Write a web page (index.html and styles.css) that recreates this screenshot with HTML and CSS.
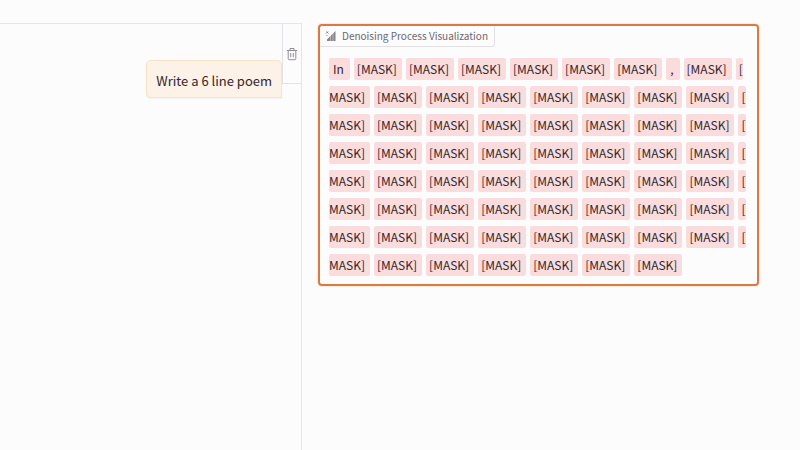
FILE: index.html
```
<!DOCTYPE html>
<html lang="en">
<head>
    <meta charset="UTF-8">
    <meta name="viewport" content="width=device-width, initial-scale=1.0">
    <title>Denoising Process Visualization</title>
    <link rel="stylesheet" href="styles.css">
</head>
<body>
    <main class="layout">
        <section class="chat">
            <button class="clear" type="button" aria-label="Clear">
                <svg viewBox="0 0 12 14" width="12" height="14" fill="none" stroke="currentColor">
                    <path d="M1 3.5h10M4 3.5V1.5h4v2M2.2 3.5v8.2q0 1 1 1h5.6q1 0 1-1V3.5M4.7 6v4.3M7.3 6v4.3"/>
                </svg>
            </button>
            <p class="message">Write a 6 line poem</p>
        </section>
        <section class="denoise">
            <h2 class="block-label">
                <svg viewBox="0 0 12 12" width="12" height="12">
                    <path fill="currentColor" opacity=".8" d="M10.500 1v10H2V9.500z"/>
                    <path fill="none" stroke="#fdfcfd" stroke-width=".4" d="M5.500 5v6M8 3v8"/>
                    <path fill="none" stroke="currentColor" stroke-width=".8" d="M1 3.500l2-2M1.500 1.500l2 2M1.500 5.500h1"/>
                </svg>
                Denoising Process Visualization
            </h2>
            <div class="tokens" id="tokens"></div>
        </section>
    </main>

    <script>
        const mask = '[MASK]';
        const full = ['MASK]', ...Array(7).fill(mask), '['];
        const lines = [
            ['In', ...Array(6).fill(mask), ',', mask, '['],
            ...Array(6).fill(full),
            ['MASK]', ...Array(6).fill(mask)]
        ];

        // a token that wraps is cut flush at the line edge
        function tokenClass(text) {
            if (text === 'MASK]') return 'token tail';
            if (text === '[') return 'token head';
            if (text !== mask) return 'token word';
            return 'token';
        }

        document.getElementById('tokens').innerHTML = lines.map(line => `
            <div class="line">
                ${line.map(text => `<span class="${tokenClass(text)}">${text}</span>`).join('')}
            </div>
        `).join('');
    </script>
</body>
</html>
```
FILE: styles.css
```
* {
    box-sizing: border-box;
}
body {
    margin: 0;
    background-color: #fdfcfd;
    color: #30262b;
    font-family: "Noto Sans CJK SC", "Open Sans", sans-serif;
}
.layout {
    display: grid;
    grid-template-columns: 302fr 441fr;
    gap: 16px;
    align-items: start;
    min-height: 100vh;
    padding: 23px 41px 0 0;
}
.chat {
    display: flex;
    align-items: flex-start;
    flex-direction: row-reverse;
    align-self: stretch;
    border-top: 1px solid #e8e5e8;
    border-right: 1px solid #e8e5e8;
}
.clear {
    display: flex;
    justify-content: center;
    align-items: center;
    width: 19px;
    height: 60px;
    padding: 0;
    border: solid #e4e1e6;
    border-width: 0 0 1px 1px;
    background: none;
    color: #908d94;
    cursor: pointer;
}
.message {
    margin: 36px 0 0;
    padding: 10px 9px 6px;
    border: 1px solid #fae3c4;
    border-radius: 5px 5px 0 5px;
    background-color: #fdf2e7;
    box-shadow: 0 1px 2px #0000000d;
    font-size: 13px;
    line-height: 20px;
}
.denoise {
    border: 2px solid #d97a45;
    border-radius: 4px;
    margin-top: 1px;
    box-shadow: 0 0 2px #f5bd92;
    overflow: hidden;
}
.block-label {
    display: flex;
    align-items: center;
    gap: 5px;
    width: fit-content;
    margin: 0;
    padding: 0 6px 0 5px;
    border: solid #e4e1e6;
    border-width: 0 1px 1px 0;
    border-radius: 0 0 3px 0;
    color: #6b676f;
    font-size: 10px;
    font-weight: 400;
    line-height: 20px;
}
.tokens {
    display: flex;
    flex-direction: column;
    gap: 6px;
    padding: 11px 9px 8px;
    font-size: 12px;
    line-height: 22px;
}
.line {
    display: flex;
    gap: 4px;
}
.token {
    padding: 0 5px 0 3px;
    border-radius: 2px;
    background-color: #fbdcdd;
    white-space: nowrap;
}
.word {
    padding: 0 6px 0 4px;
}
.tail {
    padding-left: 0;
}
.head {
    padding-right: 0;
}
```
